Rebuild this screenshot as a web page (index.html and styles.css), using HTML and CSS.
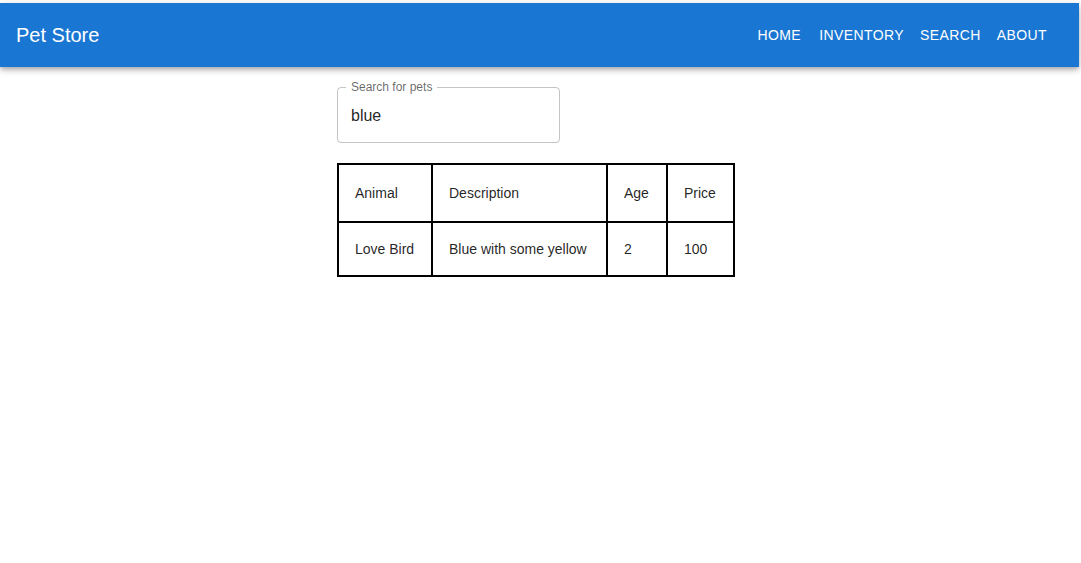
FILE: index.html
```html
<!DOCTYPE html>
<html>
<head>
<meta charset="utf-8">
<link rel="stylesheet" href="styles.css">
</head>
<body>
<div class="page">
  <header class="appbar">
    <div class="brand">Pet Store</div>
    <nav class="nav">
      <a class="nav-btn">HOME</a>
      <a class="nav-btn">INVENTORY</a>
      <a class="nav-btn">SEARCH</a>
      <a class="nav-btn">ABOUT</a>
    </nav>
  </header>
  <main class="content">
    <div class="field">
      <span class="field-label">Search for pets</span>
      <div class="field-value">blue</div>
    </div>
    <table class="pets">
      <colgroup>
        <col class="c-animal">
        <col class="c-desc">
        <col class="c-age">
        <col class="c-price">
      </colgroup>
      <thead>
        <tr><th>Animal</th><th>Description</th><th>Age</th><th>Price</th></tr>
      </thead>
      <tbody>
        <tr><td>Love Bird</td><td>Blue with some yellow</td><td>2</td><td>100</td></tr>
      </tbody>
    </table>
  </main>
</div>
</body>
</html>
```

FILE: styles.css
```css
* { box-sizing: border-box; }
html, body { margin: 0; padding: 0; background: #fff; }
body {
  font-family: "Liberation Sans", Arial, sans-serif;
  color: rgba(0,0,0,0.87);
}
.page {
  padding: 3px 2px 0 0;
}
.appbar {
  height: 64px;
  background: #1976d2;
  color: #fff;
  display: flex;
  align-items: center;
  justify-content: space-between;
  padding: 0 24px 0 16px;
  box-shadow: 0px 2px 4px -1px rgba(0,0,0,0.2), 0px 4px 5px 0px rgba(0,0,0,0.14), 0px 1px 10px 0px rgba(0,0,0,0.12);
}
.brand {
  font-size: 20px;
  line-height: 1.6;
}
.nav {
  display: flex;
  align-items: center;
}
.nav-btn {
  min-width: 64px;
  padding: 6px 8px;
  font-size: 14px;
  letter-spacing: 0.4px;
  line-height: 1.75;
  text-align: center;
  color: #fff;
}
.content {
  width: 405px;
  margin: 20px auto 0;
  display: flex;
  flex-direction: column;
  align-items: flex-start;
  gap: 20px;
}
.field {
  position: relative;
  width: 223px;
  height: 56px;
  border: 1px solid rgba(0,0,0,0.23);
  border-radius: 4px;
  display: flex;
  align-items: center;
  padding: 0 13px;
}
.field-label {
  position: absolute;
  left: 8px;
  top: -9px;
  padding: 0 5px;
  background: #fff;
  font-size: 12px;
  line-height: 17px;
  color: rgba(0,0,0,0.6);
}
.field-value {
  font-size: 16px;
  line-height: 23px;
  color: rgba(0,0,0,0.87);
}
.pets {
  border-collapse: collapse;
  border: 2px solid #000;
  font-size: 14px;
  table-layout: fixed;
  width: 398px;
}
.c-animal { width: 94px; }
.c-desc { width: 175px; }
.c-age { width: 60px; }
.c-price { width: 67px; }
.pets th, .pets td {
  border: 2px solid #000;
  padding: 16px;
  text-align: left;
  white-space: nowrap;
}
.pets th {
  font-weight: 400;
  line-height: 24px;
}
.pets td {
  line-height: 20px;
}
```
